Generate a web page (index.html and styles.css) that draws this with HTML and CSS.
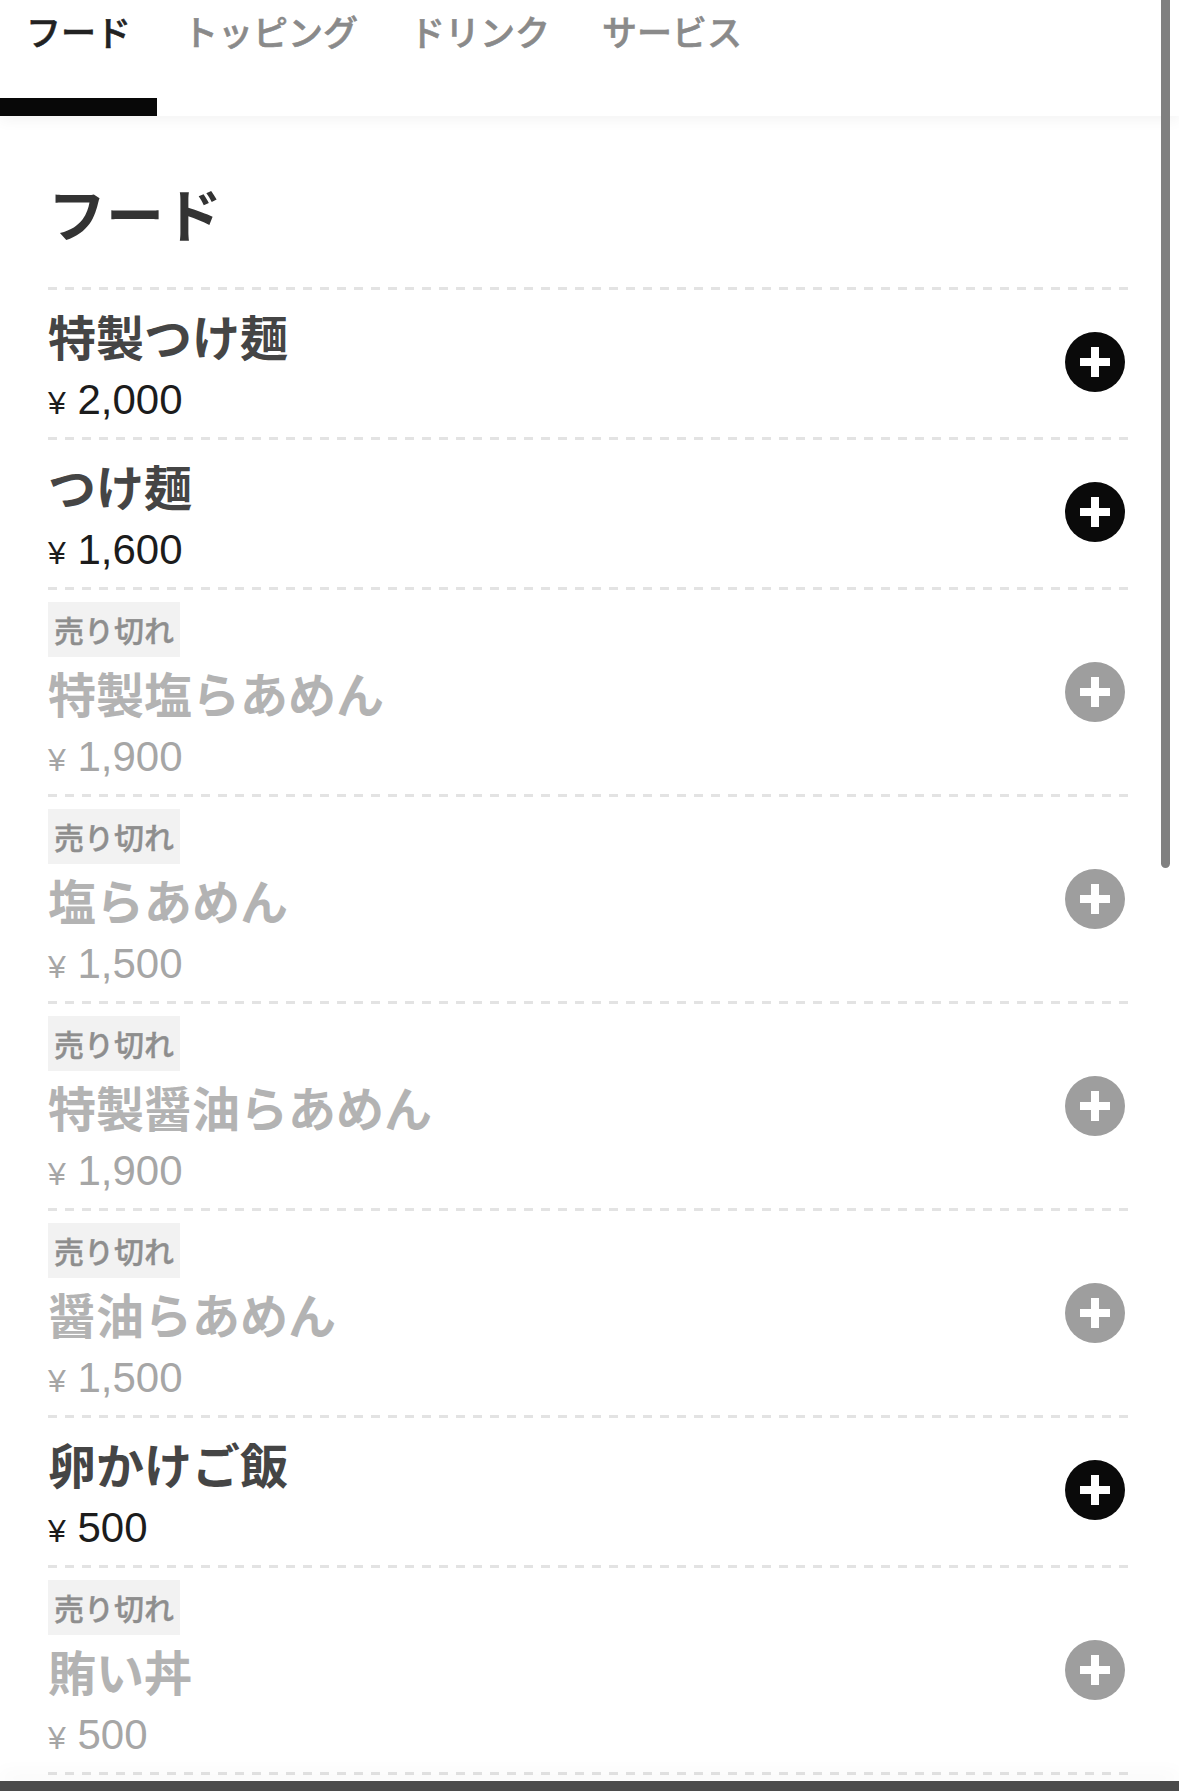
FILE: index.html
```html
<!DOCTYPE html>
<html lang="ja">
<head>
<meta charset="utf-8">
<title>メニュー</title>
<link rel="stylesheet" href="styles.css">
</head>
<body>
<header class="tabbar">
  <nav class="tabs">
    <a class="tab is-active">フード</a>
    <a class="tab">トッピング</a>
    <a class="tab">ドリンク</a>
    <a class="tab">サービス</a>
  </nav>
</header>

<main class="menu">
  <h2 class="section-title">フード</h2>
  <ul class="items">
    <li class="item">
      <div class="info">
        <p class="name">特製つけ麺</p>
        <p class="price"><span class="yen">¥</span> 2,000</p>
      </div>
      <button class="add" aria-label="追加"><svg viewBox="0 0 60 60" width="60" height="60"><circle cx="30" cy="30" r="30"/><rect x="15" y="26" width="30" height="8" fill="#fff"/><rect x="26" y="15" width="8" height="30" fill="#fff"/></svg></button>
    </li>
    <li class="item">
      <div class="info">
        <p class="name">つけ麺</p>
        <p class="price"><span class="yen">¥</span> 1,600</p>
      </div>
      <button class="add" aria-label="追加"><svg viewBox="0 0 60 60" width="60" height="60"><circle cx="30" cy="30" r="30"/><rect x="15" y="26" width="30" height="8" fill="#fff"/><rect x="26" y="15" width="8" height="30" fill="#fff"/></svg></button>
    </li>
    <li class="item is-sold-out">
      <div class="info">
        <span class="badge">売り切れ</span>
        <p class="name">特製塩らあめん</p>
        <p class="price"><span class="yen">¥</span> 1,900</p>
      </div>
      <button class="add" aria-label="追加"><svg viewBox="0 0 60 60" width="60" height="60"><circle cx="30" cy="30" r="30"/><rect x="15" y="26" width="30" height="8" fill="#fff"/><rect x="26" y="15" width="8" height="30" fill="#fff"/></svg></button>
    </li>
    <li class="item is-sold-out">
      <div class="info">
        <span class="badge">売り切れ</span>
        <p class="name">塩らあめん</p>
        <p class="price"><span class="yen">¥</span> 1,500</p>
      </div>
      <button class="add" aria-label="追加"><svg viewBox="0 0 60 60" width="60" height="60"><circle cx="30" cy="30" r="30"/><rect x="15" y="26" width="30" height="8" fill="#fff"/><rect x="26" y="15" width="8" height="30" fill="#fff"/></svg></button>
    </li>
    <li class="item is-sold-out">
      <div class="info">
        <span class="badge">売り切れ</span>
        <p class="name">特製醤油らあめん</p>
        <p class="price"><span class="yen">¥</span> 1,900</p>
      </div>
      <button class="add" aria-label="追加"><svg viewBox="0 0 60 60" width="60" height="60"><circle cx="30" cy="30" r="30"/><rect x="15" y="26" width="30" height="8" fill="#fff"/><rect x="26" y="15" width="8" height="30" fill="#fff"/></svg></button>
    </li>
    <li class="item is-sold-out">
      <div class="info">
        <span class="badge">売り切れ</span>
        <p class="name">醤油らあめん</p>
        <p class="price"><span class="yen">¥</span> 1,500</p>
      </div>
      <button class="add" aria-label="追加"><svg viewBox="0 0 60 60" width="60" height="60"><circle cx="30" cy="30" r="30"/><rect x="15" y="26" width="30" height="8" fill="#fff"/><rect x="26" y="15" width="8" height="30" fill="#fff"/></svg></button>
    </li>
    <li class="item">
      <div class="info">
        <p class="name">卵かけご飯</p>
        <p class="price"><span class="yen">¥</span> 500</p>
      </div>
      <button class="add" aria-label="追加"><svg viewBox="0 0 60 60" width="60" height="60"><circle cx="30" cy="30" r="30"/><rect x="15" y="26" width="30" height="8" fill="#fff"/><rect x="26" y="15" width="8" height="30" fill="#fff"/></svg></button>
    </li>
    <li class="item is-sold-out">
      <div class="info">
        <span class="badge">売り切れ</span>
        <p class="name">賄い丼</p>
        <p class="price"><span class="yen">¥</span> 500</p>
      </div>
      <button class="add" aria-label="追加"><svg viewBox="0 0 60 60" width="60" height="60"><circle cx="30" cy="30" r="30"/><rect x="15" y="26" width="30" height="8" fill="#fff"/><rect x="26" y="15" width="8" height="30" fill="#fff"/></svg></button>
    </li>
  </ul>
</main>

<div class="scroll-thumb"></div>
<div class="cart-bar"></div>
</body>
</html>
```

FILE: styles.css
```css
html, body {
  margin: 0;
  padding: 0;
  overflow: hidden;
  background: #fff;
}

body {
  font-family: "Noto Sans CJK JP", "Noto Sans", sans-serif;
  color: #333;
}

/* ---------- tab bar ---------- */
.tabbar {
  position: relative;
  z-index: 2;
  height: 116px;
  background: #fff;
  box-shadow: 0 4px 14px rgba(0, 0, 0, 0.05);
}

.tabs {
  display: flex;
  height: 100%;
}

.tab {
  box-sizing: border-box;
  height: 116px;
  padding: 5px 26px 0;
  font-size: 35px;
  line-height: 52px;
  font-weight: 500;
  color: #8a8a8a;
  -webkit-text-stroke: 0.6px currentColor;
  border-bottom: 18px solid transparent;
  white-space: nowrap;
}

.tab.is-active {
  color: #222;
  border-bottom-color: #080808;
}

/* ---------- menu ---------- */
.menu {
  padding: 0 49px 0 48px;
}

.section-title {
  margin: 54px 0 32px 0;
  font-size: 58px;
  line-height: 85px;
  font-weight: 700;
  color: #333;
}

.items {
  list-style: none;
  margin: 0;
  padding: 0 0 3px;
  background:
    repeating-linear-gradient(90deg, #e3e3e3 0 9px, transparent 9px 17px) left bottom / 100% 3px no-repeat;
}

.item {
  display: flex;
  align-items: center;
  justify-content: space-between;
  padding: 12px 0 12px;
  background:
    repeating-linear-gradient(90deg, #e3e3e3 0 9px, transparent 9px 17px) left top / 100% 3px no-repeat;
}

.item.is-sold-out {
  padding-top: 15px;
}

.info {
  display: flex;
  flex-direction: column;
  align-items: flex-start;
}

.name {
  margin: 0;
  font-size: 48px;
  line-height: 72px;
  font-weight: 700;
  color: #454545;
}

.price {
  margin: 3px 0 0;
  font-family: "Liberation Sans", "Noto Sans CJK JP", sans-serif;
  font-size: 42px;
  line-height: 51px;
  color: #1c1c1c;
}

.yen {
  font-size: 32px;
  line-height: 1;
}

.badge {
  display: block;
  height: 55px;
  margin-bottom: -1px;
  padding: 0 6px;
  background: #f2f2f2;
  font-size: 30px;
  line-height: 55px;
  font-weight: 500;
  color: #8e8e8e;
  -webkit-text-stroke: 0.4px currentColor;
}

.add {
  flex: none;
  width: 60px;
  height: 60px;
  margin-right: 5px;
  padding: 0;
  border: 0;
  background: none;
  fill: #0a0a0a;
}

.add svg {
  display: block;
}

.is-sold-out .name {
  color: #b3b3b3;
}

.is-sold-out .price {
  color: #a6a6a6;
}

.is-sold-out .add {
  fill: #9e9e9e;
}

/* ---------- overlays ---------- */
.scroll-thumb {
  position: fixed;
  top: 0;
  right: 9px;
  width: 9px;
  height: 868px;
  border-radius: 0 0 5px 5px;
  background: #808080;
  z-index: 5;
}

.cart-bar {
  position: fixed;
  left: 0;
  right: 0;
  bottom: 0;
  height: 10px;
  background: #4b4b4b;
  box-shadow: 0 -8px 18px rgba(0, 0, 0, 0.04);
  z-index: 4;
}
```
